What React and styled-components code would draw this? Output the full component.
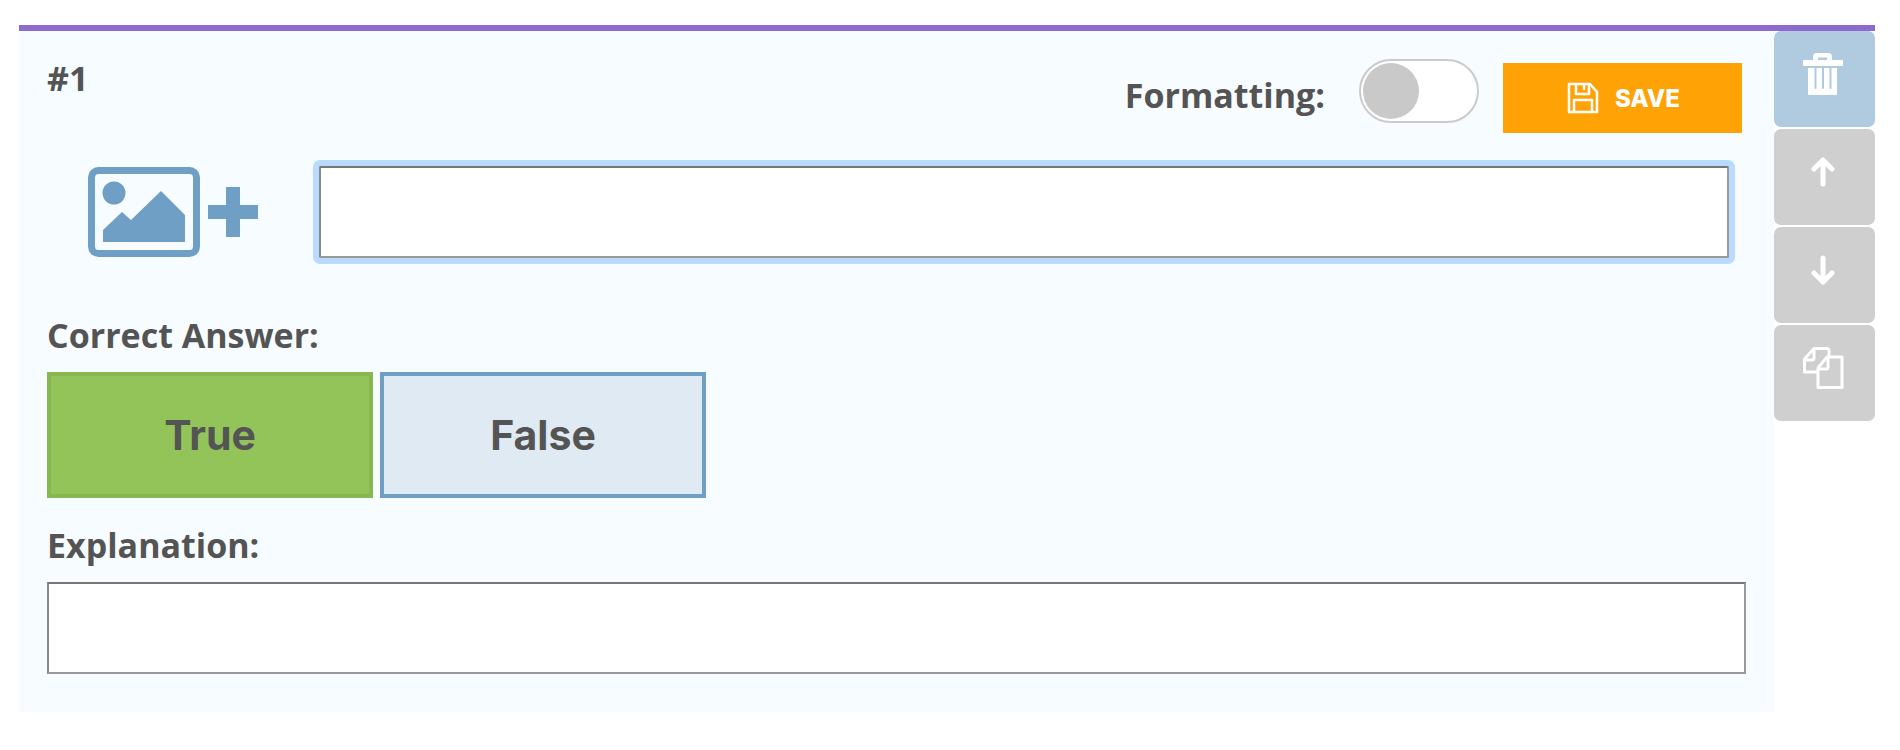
import React from 'react'
import styled, { createGlobalStyle } from 'styled-components'

const GlobalStyle = createGlobalStyle`
  html, body {
    margin: 0;
    padding: 0;
    background: #fff;
  }
  * {
    box-sizing: border-box;
  }
`

const TrashIcon = () => (
  <svg width="40" height="42" viewBox="0 0 40 42" fill="#fff">
    <path d="M10 7V4a4 4 0 0 1 4-4h11a4 4 0 0 1 4 4v3h10a1 1 0 0 1 1 1v4a1 1 0 0 1-1 1H1a1 1 0 0 1-1-1V8a1 1 0 0 1 1-1zM15 7h9V4.500h-9z" fillRule="evenodd" />
    <path d="M5 15h6.500v20a1 1 0 0 0 2 0V15h5.500v20a1 1 0 0 0 2 0V15h5.500v20a1 1 0 0 0 2 0V15H34v26a1 1 0 0 1-1 1H6a1 1 0 0 1-1-1z" />
  </svg>
)

const ArrowIcon = ({ down }) => (
  <svg width="24" height="30" viewBox="0 0 24 30" fill="none" stroke="#fff" strokeWidth="5" strokeLinecap="round" strokeLinejoin="round">
    {down
      ? <path d="M12 3v24M3 18l9 9 9-9" />
      : <path d="M12 27V3M3 12l9-9 9 9" />}
  </svg>
)

const CopyIcon = () => (
  <svg width="42" height="42" viewBox="0 0 42 42" fill="none" stroke="#fff" strokeWidth="3" strokeLinejoin="round">
    <path d="M15 25H2.500V12L12 1.500h13a2 2 0 0 1 2 2V10" />
    <path d="M2.500 13H10a2 2 0 0 0 2-2V1.500" />
    <path d="M16 40.500V21l9-11h15v30.500z" fill="#cfcfcf" />
    <path d="M16 22h8a2 2 0 0 0 2-2V10" />
  </svg>
)

const SaveIcon = () => (
  <svg width="32" height="32" viewBox="0 0 32 32" fill="none" stroke="#fff" strokeWidth="2.500" strokeLinejoin="round">
    <path d="M2 2h21l7 8v20H2z" />
    <path d="M9 2v10h13V2" />
    <path d="M17 2v6" />
    <path d="M7 30V18h18v12" />
  </svg>
)

const AddImageIcon = () => (
  <svg width="170" height="90" viewBox="0 0 170 90">
    <rect x="3.500" y="3.500" width="105" height="83" rx="7" fill="none" stroke="#6f9fc4" strokeWidth="7" />
    <circle cx="26" cy="26" r="11.500" fill="#6f9fc4" />
    <path d="M15 63l19-18 9 8 30-29 24 24v27H15z" fill="#6f9fc4" />
    <path d="M120 38h18V20h14v18h18v14h-18v18h-14V52h-18z" fill="#6f9fc4" />
  </svg>
)

export default function App() {
  return (
    <>
      <GlobalStyle />
      <Page>
        <Card>
          <Panel>
            <Header>
              <Number>#1</Number>
              <Controls>
                <ToggleLabel>Formatting:</ToggleLabel>
                <Toggle><Knob /></Toggle>
                <SaveButton>
                  <SaveIcon />
                  <span>SAVE</span>
                </SaveButton>
              </Controls>
            </Header>
            <QuestionRow>
              <ImageButton><AddImageIcon /></ImageButton>
              <QuestionInput />
            </QuestionRow>
            <AnswerLabel>Correct Answer:</AnswerLabel>
            <Choices>
              <Choice correct>True</Choice>
              <Choice>False</Choice>
            </Choices>
            <ExplanationLabel>Explanation:</ExplanationLabel>
            <ExplanationInput />
          </Panel>
          <Sidebar>
            <SideButton danger><TrashIcon /></SideButton>
            <SideButton><ArrowIcon /></SideButton>
            <SideButton><ArrowIcon down /></SideButton>
            <SideButton><CopyIcon /></SideButton>
          </Sidebar>
        </Card>
      </Page>
    </>
  )
}

const Page = styled.div`
  padding: 25px 0 0 19px;
  font-family: "Open Sans", sans-serif;
  color: #545454;
`

const Card = styled.div`
  width: 1856px;
  border-top: 6px solid #8d6bcb;
  display: flex;
  align-items: flex-start;
`

const Panel = styled.div`
  width: 1755px;
  height: 681px;
  padding: 0 28px;
  background: #f6fcff;
  display: flex;
  flex-direction: column;
`

const Header = styled.div`
  height: 135px;
  display: flex;
  justify-content: space-between;
  align-items: flex-start;
`

const Number = styled.div`
  margin-top: 25px;
  font-size: 34px;
  line-height: 44px;
  font-weight: 700;
`

const Controls = styled.div`
  display: flex;
  align-items: flex-start;
  margin-top: 28px;
  padding-right: 4px;
`

const ToggleLabel = styled.div`
  margin-top: 11px;
  font-size: 34px;
  line-height: 50px;
  font-weight: 700;
`

const Toggle = styled.div`
  width: 120px;
  height: 64px;
  margin-left: 34px;
  padding: 2px;
  border: 2px solid #cbcbcb;
  border-radius: 32px;
  background: #fff;
`

const Knob = styled.div`
  width: 56px;
  height: 56px;
  border-radius: 50%;
  background: #c9c9c9;
`

const SaveButton = styled.button`
  width: 239px;
  height: 70px;
  margin: 4px 0 0 24px;
  padding: 0 0 0 2px;
  border: 0;
  background: #ffa206;
  color: #fff;
  display: flex;
  align-items: center;
  justify-content: center;
  gap: 16px;
  font-family: Inter, sans-serif;
  font-size: 24px;
  font-weight: 800;
`

const QuestionRow = styled.div`
  display: flex;
  align-items: center;
  padding: 0 17px 0 41px;
`

const ImageButton = styled.div`
  display: flex;
  margin-right: 61px;
`

const TextField = styled.input`
  display: block;
  background: #fff;
  border: 2px solid #999;
  border-top-color: #767676;
  border-left-color: #8a8a8a;
  border-radius: 0;
  padding: 0;
`

const QuestionInput = styled(TextField)`
  flex: 1;
  height: 92px;
  outline: 6px solid #b9dbff;
  outline-offset: 0;
  border-radius: 1px;
`

const FieldLabel = styled.div`
  font-size: 34px;
  line-height: 42px;
  font-weight: 700;
`

const AnswerLabel = styled(FieldLabel)`
  margin-top: 56px;
`

const ExplanationLabel = styled(FieldLabel)`
  margin-top: 26px;
`

const Choices = styled.div`
  display: flex;
  gap: 7px;
  margin-top: 16px;
`

const Choice = styled.button`
  width: 326px;
  height: 126px;
  padding: 0;
  border: 4px solid ${p => (p.correct ? '#88b650' : '#6f9fc4')};
  background: ${p => (p.correct ? '#93c45a' : '#e0eaf3')};
  color: #545454;
  font-family: Inter, sans-serif;
  font-size: 41px;
  font-weight: 700;
`

const ExplanationInput = styled(TextField)`
  width: 100%;
  height: 92px;
  margin-top: 16px;
`

const Sidebar = styled.div`
  width: 101px;
  display: flex;
  flex-direction: column;
  gap: 2px;
`

const SideButton = styled.button`
  height: 96px;
  padding: 0 3px 10px 0;
  border: 0;
  border-radius: 7px;
  background: ${p => (p.danger ? '#b0cbe0' : '#cfcfcf')};
  display: flex;
  align-items: center;
  justify-content: center;
`
